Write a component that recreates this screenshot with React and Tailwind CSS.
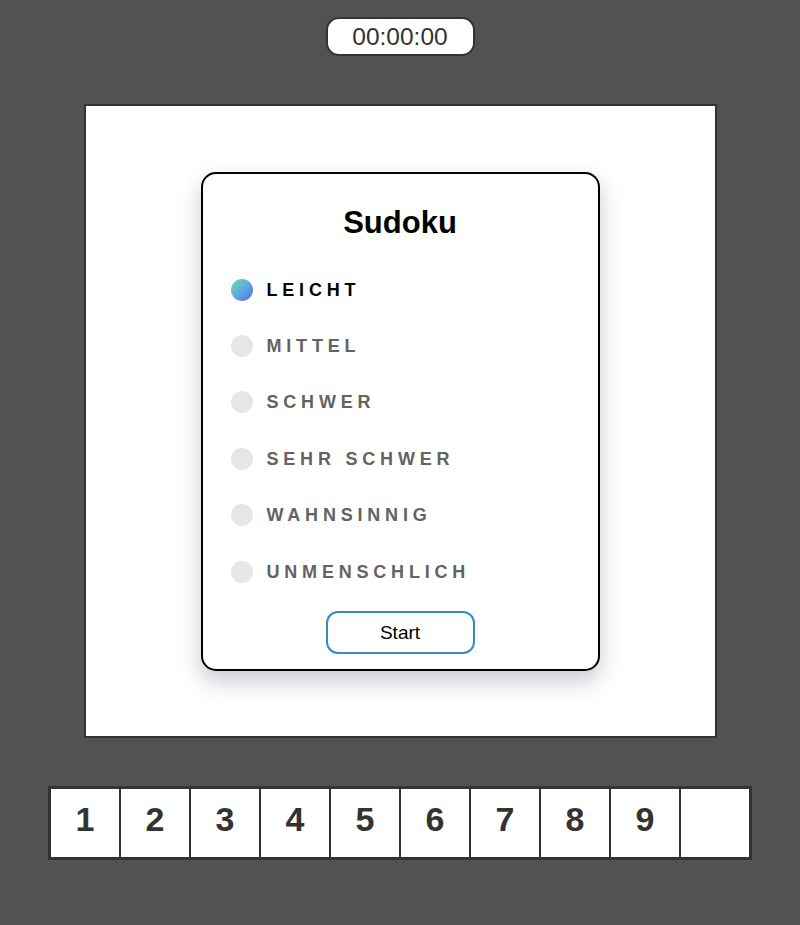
import React from "react";

const levels = ["LEICHT", "MITTEL", "SCHWER", "SEHR SCHWER", "WAHNSINNIG", "UNMENSCHLICH"];

export default function App() {
  return (
    <div className="min-h-[925px] w-full bg-[#525254] flex flex-col items-center pt-[17px] font-['Liberation_Sans',Arial,sans-serif]">
      <div className="w-[149px] h-[39px] bg-white border-2 border-[#333] rounded-[13px] flex items-center justify-center pt-[1px] text-[24.5px] text-[#333] leading-none">
        00:00:00
      </div>
      <div className="mt-[48px] w-[633px] h-[634px] bg-white border-2 border-[#333] flex items-center justify-center">
        <div className="w-[399px] h-[499px] border-2 border-black rounded-[15px] bg-white shadow-[0_10px_22px_rgba(60,60,90,0.28)] flex flex-col items-center pt-[30px]">
          <div className="text-[31px] font-bold text-black leading-[38px]">Sudoku</div>
          <div className="w-full mt-[20px] pl-[28px]">
            {levels.map((l, i) => (
              <div key={l} className="h-[56.4px] flex items-center">
                {i === 0 ? (
                  <span className="w-[22px] h-[22px] rounded-full bg-gradient-to-br from-[#6fe0b2] to-[#5a68f5]" />
                ) : (
                  <span className="w-[22px] h-[22px] rounded-full bg-[#e6e6e6]" />
                )}
                <span
                  className={
                    "ml-[14px] text-[18px] font-bold tracking-[4.8px] leading-none " +
                    (i === 0 ? "text-black" : "text-[#636363]")
                  }
                >
                  {l}
                </span>
              </div>
            ))}
          </div>
          <button className="mt-[11px] w-[149px] h-[43px] border-2 border-[#3a8abf] rounded-[12px] bg-white text-[19px] text-black leading-none">
            Start
          </button>
        </div>
      </div>
      <div className="mt-[48px] border-[3px] border-[#333] flex bg-white">
        {[1, 2, 3, 4, 5, 6, 7, 8, 9, ""].map((n, i) => (
          <div
            key={i}
            className={
              "w-[68px] h-[68px] flex items-center justify-center pb-[7px] text-[34px] font-bold text-[#333] " +
              (i < 9 ? "border-r-2 border-[#333] w-[70px]" : "")
            }
          >
            {n}
          </div>
        ))}
      </div>
    </div>
  );
}
